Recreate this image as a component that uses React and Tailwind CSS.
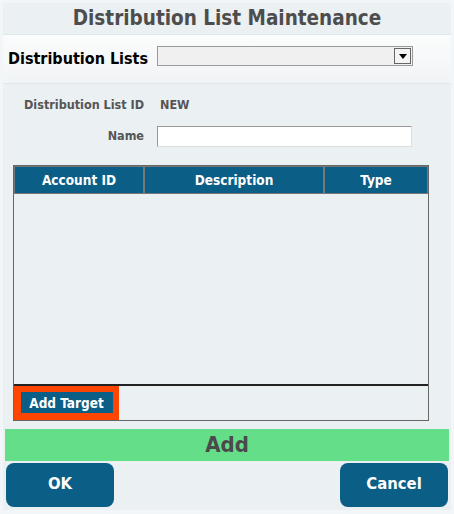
const font = { fontFamily: '"DejaVu Sans Condensed", "DejaVu Sans", Tahoma, sans-serif' }

function HeaderCell({ children, className = '' }) {
  return (
    <div
      className={`flex items-center justify-center border border-[#777] bg-[#0b5e86] text-[13.5px] font-bold text-white ${className}`}
    >
      {children}
    </div>
  )
}

export default function App() {
  return (
    <div style={font} className="h-[514px] w-[454px] bg-[#f3f6f8] p-[3px]">
      <div className="flex h-[507px] flex-col bg-[#ebf0f3]">
        {/* Title */}
        <div className="flex h-[31px] items-center justify-center text-[20.5px] font-bold text-[#4d4d4d]">
          Distribution List Maintenance
        </div>

        {/* List picker */}
        <div className="flex h-[50px] items-center border-y border-[#e2e7ea] bg-gradient-to-b from-[#fbfcfc] to-[#f1f4f6] pl-[5px] pr-[4px]">
          <span className="w-[149px] whitespace-nowrap text-[16px] font-bold text-black">Distribution Lists</span>
          <div className="mb-[6px] flex h-[20px] w-[256px] items-center justify-end border border-[#9a9a9a] bg-[#f0f0f0] pr-[1px]">
            <div className="flex h-[16px] w-[17px] items-center justify-center border border-[#666] bg-[#f4f4f4]">
              <svg width="8" height="5" viewBox="0 0 8 5">
                <path d="M0 0h8L4 5z" fill="#000" />
              </svg>
            </div>
          </div>
        </div>

        {/* Fields */}
        <div className="grid grid-cols-[142px_1fr] items-center gap-x-[12px] pt-[12px] text-[12.5px] font-bold text-[#555]">
          <span className="whitespace-nowrap pl-[21px]">Distribution List ID</span>
          <span className="pl-[3px]">NEW</span>
          <span className="mt-[11px] pr-[1px] text-right">Name</span>
          <div className="mt-[11px] h-[21px] w-[255px] border border-[#999] border-r-[#ddd] border-b-[#ddd] bg-white" />
        </div>

        {/* Targets table */}
        <div className="ml-[10px] mt-[18px] flex h-[256px] w-[416px] flex-col border border-[#666]">
          <div className="flex h-[28px]">
            <HeaderCell className="w-[130px]">Account ID</HeaderCell>
            <HeaderCell className="w-[180px]">Description</HeaderCell>
            <HeaderCell className="flex-1">Type</HeaderCell>
          </div>
          <div className="flex-1 border-b-2 border-[#222]" />
          <div className="flex h-[34px] items-center">
            <div className="flex h-full w-[105px] items-center justify-center bg-[#ff4500]">
              <button className="h-[21px] w-[92px] bg-[#0b5e86] text-[13.5px] font-bold text-white">
                Add Target
              </button>
            </div>
          </div>
        </div>

        {/* Add bar */}
        <div className="mx-[2px] mt-[8px] flex h-[32px] items-center justify-center bg-[#65de8a] text-[22px] font-bold text-[#4a4a4a]">
          Add
        </div>

        {/* Actions */}
        <div className="mt-[2px] flex justify-between px-[3px]">
          <button className="h-[44px] w-[108px] rounded-[8px] bg-[#0b5e86] text-[16.5px] font-bold text-white">
            OK
          </button>
          <button className="h-[44px] w-[108px] rounded-[8px] bg-[#0b5e86] text-[16.5px] font-bold text-white">
            Cancel
          </button>
        </div>
      </div>
    </div>
  )
}
